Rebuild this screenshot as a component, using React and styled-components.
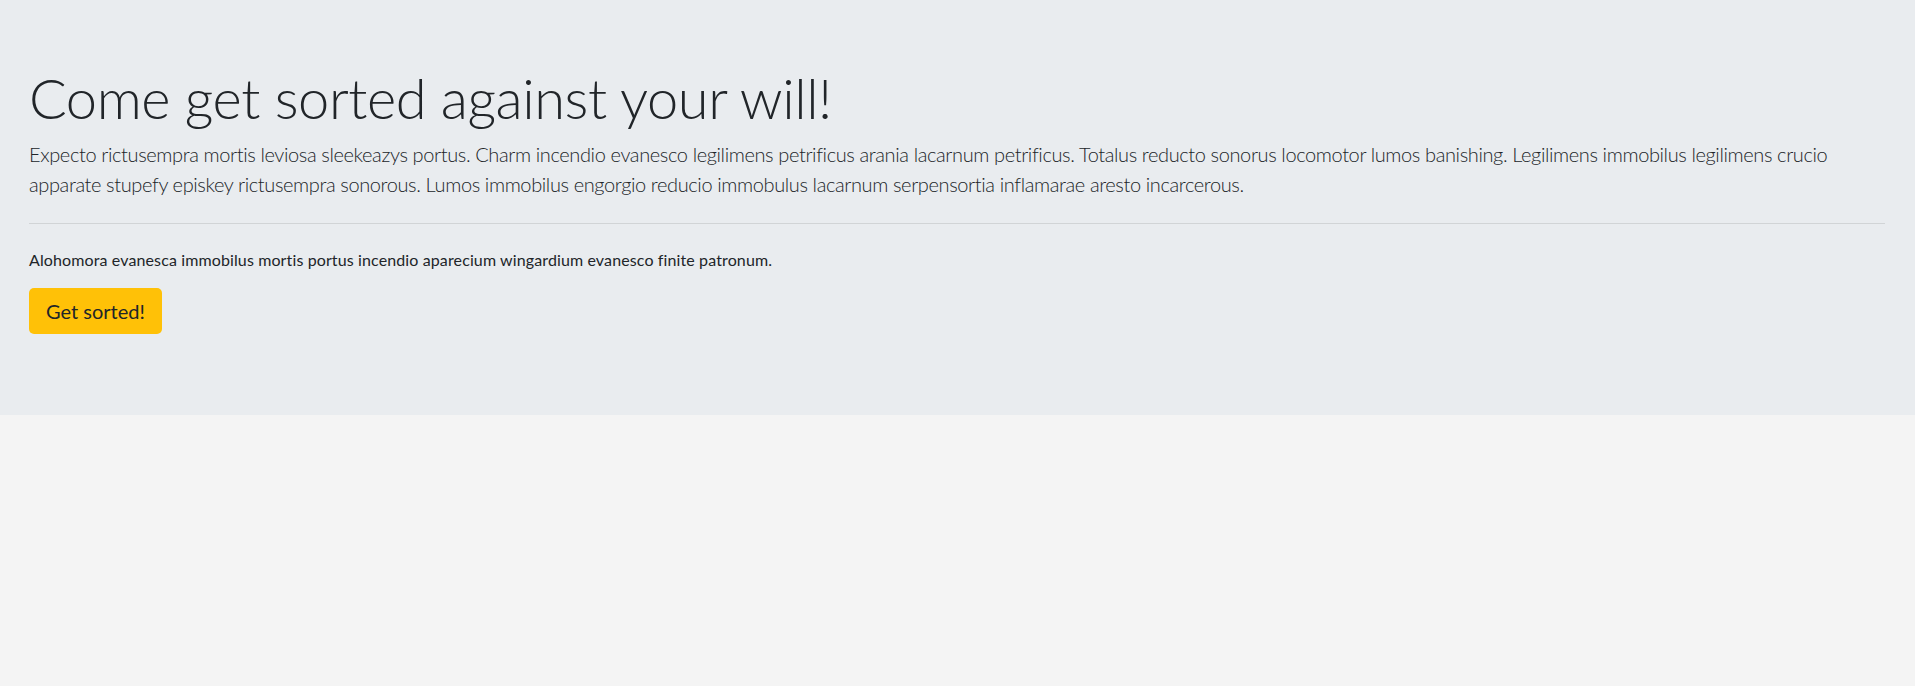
import styled, { createGlobalStyle } from "styled-components";

const GlobalStyle = createGlobalStyle`
  body {
    margin: 0;
    background: #f4f4f4;
    font-family: Lato, "Liberation Sans", sans-serif;
    color: #212529;
  }
`;

const Jumbotron = styled.div`
  background-color: #e9ecef;
  padding: 64px 30px 65px 29px;
`;

const Title = styled.h1`
  font-size: 56px;
  font-weight: 300;
  line-height: 1.2;
  letter-spacing: -0.45px;
  margin: 0 0 8px;
`;

const Lead = styled.p`
  font-size: 20px;
  font-weight: 300;
  line-height: 1.5;
  letter-spacing: -0.38px;
  margin: 0 0 16px;
`;

const Divider = styled.hr`
  border: 0;
  border-top: 1px solid rgba(0, 0, 0, 0.1);
  margin: 24px 0;
`;

const Text = styled.p`
  font-size: 16px;
  line-height: 1.5;
  letter-spacing: 0.12px;
  margin: 0 0 16px;
`;

const Button = styled.a`
  display: inline-block;
  padding: 8px 17px;
  font-size: 20px;
  font-weight: 400;
  line-height: 1.5;
  letter-spacing: 0;
  border-radius: 5px;
  background-color: #ffc107;
  color: #212529;
  text-decoration: none;
  cursor: pointer;
`;

const App = () => {
  return (
    <>
      <GlobalStyle />
      <Jumbotron>
        <Title>Come get sorted against your will!</Title>
        <Lead>
          Expecto rictusempra mortis leviosa sleekeazys portus. Charm incendio evanesco legilimens petrificus arania lacarnum petrificus. Totalus reducto sonorus locomotor lumos banishing. Legilimens immobilus legilimens crucio apparate stupefy episkey rictusempra sonorous. Lumos immobilus engorgio reducio immobulus lacarnum serpensortia inflamarae aresto incarcerous.
        </Lead>
        <Divider />
        <Text>
          Alohomora evanesca immobilus mortis portus incendio aparecium wingardium evanesco finite patronum.
        </Text>
        <Lead>
          <Button>Get sorted!</Button>
        </Lead>
      </Jumbotron>
    </>
  );
};

export default App;
